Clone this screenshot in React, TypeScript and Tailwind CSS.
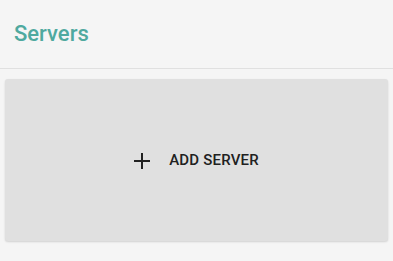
export default function App() {
  return (
    <div className="w-[393px] h-[261px] bg-[#f5f5f5] font-['Roboto',sans-serif] flex flex-col">
      <div className="h-[69px] flex items-center px-[14px] border-b border-[#e0e0e0] shrink-0">
        <h1 className="text-[22px] font-medium text-[#4fa99f] leading-none">Servers</h1>
      </div>
      <div className="px-[5px] pt-[10px]">
        <button className="w-full h-[162px] bg-[#e0e0e0] rounded-[3px] shadow-[0_1px_2px_rgba(0,0,0,0.15)] flex items-center justify-center gap-[19px] text-[#212121]">
          <svg width="16" height="16" viewBox="0 0 16 16" className="mt-[1px]">
            <path d="M8 0v16M0 8h16" stroke="#212121" strokeWidth="2" />
          </svg>
          <span className="text-[15px] font-medium uppercase tracking-[0.2px]">Add Server</span>
        </button>
      </div>
    </div>
  );
}
